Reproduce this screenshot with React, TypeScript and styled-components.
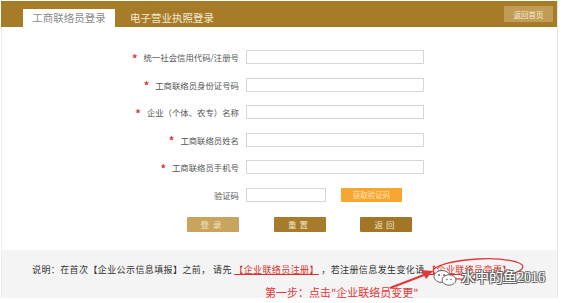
import React from "react";
import styled, { createGlobalStyle } from "styled-components";

const Global = createGlobalStyle`
  html, body { margin: 0; padding: 0; background: #ffffff; }
  body { font-family: "Noto Sans CJK SC", "Liberation Sans", sans-serif; }
  * { box-sizing: border-box; }
`;

const Page = styled.div`
  position: relative;
  width: 558px;
  height: 303px;
  padding-top: 1px;
  padding-left: 1px;
  overflow: hidden;
`;

const Frame = styled.div`
  width: 557px;
  border-right: 1px solid #e6e6e6;
`;

const Header = styled.div`
  display: flex;
  align-items: flex-end;
  height: 26px;
  background: #a77c29;
  padding-left: 22px;
`;

const Tab = styled.div<{ $active?: boolean }>`
  display: flex;
  align-items: center;
  justify-content: center;
  height: 18px;
  width: ${(p) => (p.$active ? "92px" : "114px")};
  background: ${(p) => (p.$active ? "#ffffff" : "transparent")};
  color: ${(p) => (p.$active ? "#8a8a8a" : "#f4ead2")};
  font-size: 10.5px;
  line-height: 1;
  padding-top: 1px;
`;

const BackHome = styled.div`
  align-self: flex-start;
  margin: 5px 4px 0 auto;
  width: 49px;
  height: 16px;
  background: #c29c56;
  color: #f6ecd9;
  font-size: 7.5px;
  display: flex;
  align-items: center;
  justify-content: center;
`;

const FormArea = styled.div`
  background: #ffffff;
  border-left: 1px solid #ececec;
  padding: 23px 0 16px 0;
`;

const FormGrid = styled.div`
  display: grid;
  grid-template-columns: 237px 178px;
  column-gap: 7px;
  row-gap: 13.6px;
  align-items: center;
`;

const Label = styled.div`
  display: flex;
  justify-content: flex-end;
  align-items: center;
  height: 14px;
  font-size: 8.4px;
  color: #555555;
  white-space: nowrap;
`;

const Star = styled.span`
  color: #d83a3a;
  font-size: 11px;
  font-weight: bold;
  margin-right: 6px;
  line-height: 1;
  position: relative;
  top: 1px;
`;

const Input = styled.div<{ $w?: number }>`
  width: ${(p) => (p.$w ? `${p.$w}px` : "178px")};
  height: 14px;
  border: 1px solid #d6d6d6;
  background: #fff;
`;

const CodeCell = styled.div`
  display: flex;
  align-items: center;
  gap: 15px;
`;

const CodeButton = styled.div`
  width: 61px;
  height: 14px;
  background: #f7a632;
  color: #fde4bb;
  font-size: 7.5px;
  display: flex;
  align-items: center;
  justify-content: center;
`;

const ButtonRow = styled.div`
  display: flex;
  gap: 34.5px;
  padding-left: 185px;
  margin-top: 15px;
`;

const ActionButton = styled.div<{ $tone: string }>`
  width: 52px;
  height: 15px;
  background: ${(p) => p.$tone};
  color: #f3e4c6;
  font-size: 8.5px;
  letter-spacing: ${(p) => (p.$tone === "#c9a45e" ? "4px" : "3px")};
  display: flex;
  align-items: center;
  justify-content: center;
  border-radius: 1px;
`;

const Footer = styled.div`
  margin-top: 2px;
  height: 48px;
  background: #f4f4f4;
  border-left: 1px solid #ececec;
  padding: 13px 0 0 30px;
  font-size: 9px;
  letter-spacing: 0.4px;
  color: #333333;
  white-space: nowrap;
`;

const RedLink = styled.span`
  color: #d8302c;
  text-decoration: underline;
`;

const Annotation = styled.div`
  position: absolute;
  left: 265px;
  top: 287px;
  font-size: 11px;
  color: #e2383a;
  white-space: nowrap;
  line-height: 1;
`;

const Overlay = styled.svg`
  position: absolute;
  left: 0;
  top: 0;
  pointer-events: none;
`;

const Watermark = styled.div`
  position: absolute;
  left: 433px;
  top: 270px;
  display: flex;
  align-items: center;
  gap: 4px;
  white-space: nowrap;
  font-family: "Liberation Serif", "Noto Sans CJK SC", serif;
  font-size: 14px;
  color: #ffffff;
  line-height: 1;
  text-shadow: -1px -1px 0 #666, 1px -1px 0 #666, -1px 1px 0 #666, 1px 1px 0 #666;
`;

const fields = [
  { label: "统一社会信用代码/注册号", star: true },
  { label: "工商联络员身份证号码", star: true },
  { label: "企业（个体、农专）名称", star: true },
  { label: "工商联络员姓名", star: true },
  { label: "工商联络员手机号", star: true },
];

export default function App() {
  return (
    <>
      <Global />
      <Page>
        <Frame>
          <Header>
            <Tab $active>工商联络员登录</Tab>
            <Tab>电子营业执照登录</Tab>
            <BackHome>返回首页</BackHome>
          </Header>
          <FormArea>
            <FormGrid>
              {fields.map((f) => (
                <React.Fragment key={f.label}>
                  <Label>
                    {f.star && <Star>*</Star>}
                    {f.label}
                  </Label>
                  <Input />
                </React.Fragment>
              ))}
              <Label>验证码</Label>
              <CodeCell>
                <Input $w={80} />
                <CodeButton>获取验证码</CodeButton>
              </CodeCell>
            </FormGrid>
            <ButtonRow>
              <ActionButton $tone="#c9a45e">登录</ActionButton>
              <ActionButton $tone="#a67c2c">重置</ActionButton>
              <ActionButton $tone="#a27626">返回</ActionButton>
            </ButtonRow>
          </FormArea>
          <Footer>
            说明：在首次【企业公示信息填报】之前， 请先 <RedLink>【企业联络员注册】</RedLink> ，若注册信息发生变化请 <RedLink>【企业联络员变更】</RedLink>
          </Footer>
        </Frame>
        <Overlay width="564" height="303" viewBox="0 0 564 303">
          <ellipse cx="478" cy="269" rx="45" ry="10" fill="none" stroke="#e0383a" strokeWidth="1.3" transform="rotate(-3 478 269)" />
          <path d="M390 288 L424 275" stroke="#e0383a" strokeWidth="2.2" fill="none" />
          <path d="M433 271 L421 270 L426 279 Z" fill="#e0383a" />
        </Overlay>
        <Annotation>第一步：点击"企业联络员变更"</Annotation>
        <Watermark>
          <svg width="24" height="16" viewBox="0 0 24 16">
            <ellipse cx="9" cy="6.5" rx="8" ry="6" fill="#fff" stroke="#666" strokeWidth="1" />
            <ellipse cx="16" cy="10" rx="7" ry="5.2" fill="#fff" stroke="#666" strokeWidth="1" />
            <circle cx="6" cy="5" r="1" fill="#666" />
            <circle cx="11" cy="5" r="1" fill="#666" />
            <circle cx="14" cy="9.5" r="0.8" fill="#666" />
            <circle cx="18" cy="9.5" r="0.8" fill="#666" />
          </svg>
          <span>水中的鱼2016</span>
        </Watermark>
      </Page>
    </>
  );
}
